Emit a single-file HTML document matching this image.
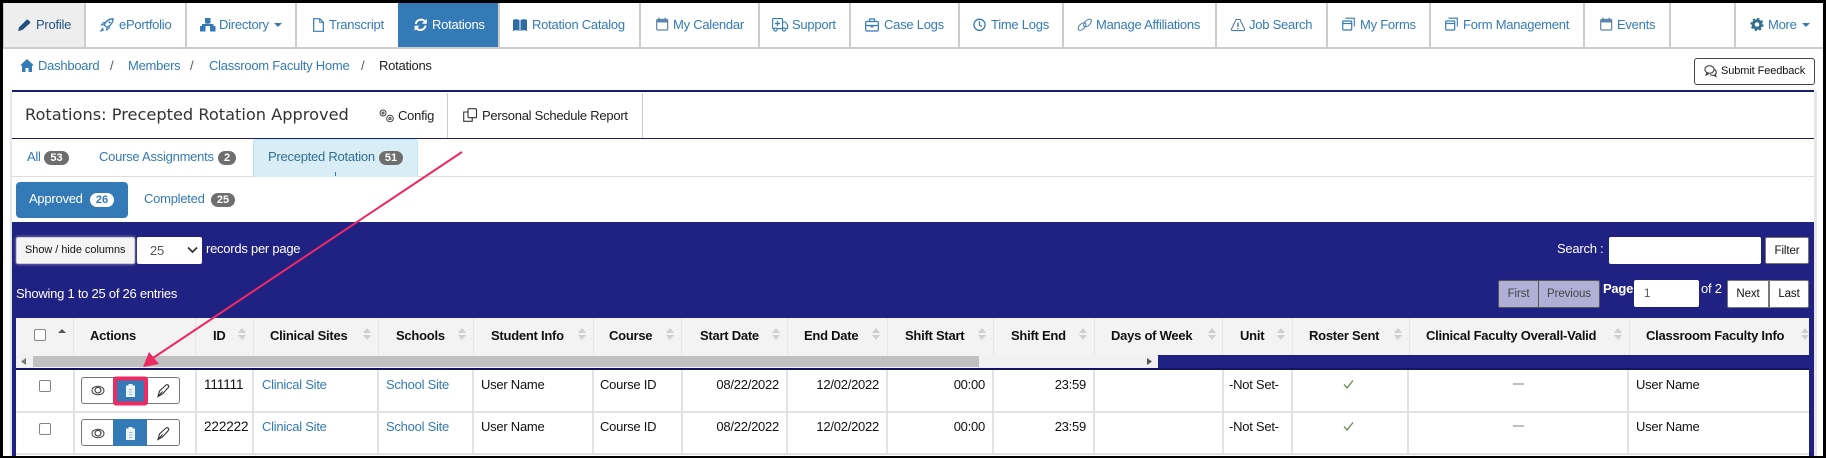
<!DOCTYPE html>
<html><head><meta charset="utf-8"><title>Rotations</title>
<style>
html,body{margin:0;padding:0}
body{width:1826px;height:458px;position:relative;overflow:hidden;background:#fff;font-family:"Liberation Sans",Arial,sans-serif;font-size:13px;color:#111}
div,span.t{position:absolute}
.t{white-space:nowrap;line-height:16px;letter-spacing:-.25px}
.l{color:#337ab7}
.d{background:#ccc;width:2px;top:3px;height:45px}
.v{background:#e6e6e6;width:1px;top:318px;height:37px}
.r{background:#e2e2e2;width:2px;top:370px;height:84px}
.b{height:14px;border-radius:7px;background:#6e6e6e;color:#fff;font-weight:bold;font-size:11px;line-height:15px;text-align:center}
.h{font-weight:bold;color:#111;top:328px}
.w{color:#fff}
.btn{background:#fff;border:1px solid #777;box-sizing:border-box;border-radius:2px;text-align:center;font-size:11.5px;line-height:27px;color:#111;letter-spacing:-.1px}
.c{background:#fff;border:1px solid #858585;box-sizing:border-box;border-radius:2px;width:12px;height:12px}
</style></head><body>

<!-- NAV -->
<div style="left:3px;top:3px;width:81px;height:45px;background:#eee"></div>
<div style="left:398px;top:3px;width:100px;height:45px;background:#337ab7"></div>
<div style="left:0;top:47px;width:1826px;height:2px;background:#ccc"></div>
<div class="d" style="left:2px"></div><div class="d" style="left:84px"></div><div class="d" style="left:185px"></div><div class="d" style="left:295px"></div><div class="d" style="left:498px"></div><div class="d" style="left:639px"></div><div class="d" style="left:758px"></div><div class="d" style="left:849px"></div><div class="d" style="left:958px"></div><div class="d" style="left:1062px"></div><div class="d" style="left:1215px"></div><div class="d" style="left:1326px"></div><div class="d" style="left:1429px"></div><div class="d" style="left:1583px"></div><div class="d" style="left:1669px"></div><div class="d" style="left:1734px"></div>

<span class="t" style="left:36px;top:17px;color:#23527c">Profile</span>
<span class="t l" style="left:119px;top:17px">ePortfolio</span>
<span class="t l" style="left:219px;top:17px">Directory</span>
<span class="t l" style="left:329px;top:17px">Transcript</span>
<span class="t w" style="left:432px;top:17px">Rotations</span>
<span class="t l" style="left:532px;top:17px">Rotation Catalog</span>
<span class="t l" style="left:673px;top:17px">My Calendar</span>
<span class="t l" style="left:792px;top:17px">Support</span>
<span class="t l" style="left:884px;top:17px">Case Logs</span>
<span class="t l" style="left:991px;top:17px">Time Logs</span>
<span class="t l" style="left:1096px;top:17px">Manage Affiliations</span>
<span class="t l" style="left:1249px;top:17px">Job Search</span>
<span class="t l" style="left:1360px;top:17px">My Forms</span>
<span class="t l" style="left:1463px;top:17px">Form Management</span>
<span class="t l" style="left:1617px;top:17px">Events</span>
<span class="t l" style="left:1768px;top:17px">More</span>

<!-- BREADCRUMB -->
<span class="t l" style="left:38px;top:58px">Dashboard</span>
<span class="t" style="left:110px;top:58px;color:#555">/</span>
<span class="t l" style="left:128px;top:58px">Members</span>
<span class="t" style="left:190px;top:58px;color:#555">/</span>
<span class="t l" style="left:209px;top:58px">Classroom Faculty Home</span>
<span class="t" style="left:361px;top:58px;color:#555">/</span>
<span class="t" style="left:379px;top:58px;color:#222">Rotations</span>
<div style="left:1694px;top:58px;width:121px;height:27px;border:1px solid #444;box-sizing:border-box;border-radius:3px;background:#fff"></div>
<span class="t" style="left:1721px;top:63px;font-size:11px;letter-spacing:-.1px;color:#111">Submit Feedback</span>

<!-- PANEL -->
<div style="left:10px;top:91px;width:2px;height:365px;background:#e6e6e6"></div>
<div style="left:1814px;top:91px;width:3px;height:365px;background:#e6e6e6"></div>
<div style="left:12px;top:89.5px;width:1802px;height:2px;background:#1a1c6e"></div>
<div style="left:12px;top:138px;width:1802px;height:1px;background:#1a1c6e"></div>
<span class="t" style="left:25px;top:107px;font-family:'DejaVu Sans',sans-serif;font-size:16.2px;letter-spacing:0;color:#333">Rotations: Precepted Rotation Approved</span>
<span class="t" style="left:398px;top:108px;color:#222">Config</span>
<span class="t" style="left:482px;top:108px;color:#222">Personal Schedule Report</span>
<div style="left:447px;top:93px;width:1px;height:45px;background:#ccc"></div>
<div style="left:642px;top:93px;width:1px;height:45px;background:#ccc"></div>

<!-- TABS -->
<div style="left:12px;top:176px;width:1802px;height:1px;background:#ddd"></div>
<div style="left:253px;top:139px;width:165px;height:38px;background:#d9edf7;border:1px solid #bce8f1;border-bottom:0;box-sizing:border-box;border-radius:3px 3px 0 0"></div>
<div style="left:335px;top:172px;width:1px;height:4px;background:#337ab7"></div>
<span class="t l" style="left:27px;top:149px">All</span><div class="b" style="left:44px;top:151px;width:25px">53</div>
<span class="t l" style="left:99px;top:149px">Course Assignments</span><div class="b" style="left:218px;top:151px;width:18px">2</div>
<span class="t" style="left:268px;top:149px;color:#31708f">Precepted Rotation</span><div class="b" style="left:379px;top:151px;width:24px">51</div>
<div style="left:16px;top:182px;width:112px;height:36px;background:#337ab7;border-radius:4px"></div>
<span class="t w" style="left:29px;top:191px">Approved</span><div class="b" style="left:90px;top:193px;width:24px;background:#fff;color:#337ab7">26</div>
<span class="t l" style="left:144px;top:191px">Completed</span><div class="b" style="left:211px;top:193px;width:24px">25</div>

<!-- NAVY -->
<div style="left:12px;top:222px;width:1802px;height:234px;background:#202283"></div>
<div style="left:16px;top:237px;width:119px;height:27px;background:#f4f4f4;border:1px solid #ccc;box-sizing:border-box;border-radius:2px;box-shadow:0 0 3px #9a9ac8"></div>
<span class="t" style="left:25px;top:242px;font-size:10.9px;letter-spacing:0;color:#111">Show / hide columns</span>
<div style="left:137px;top:237px;width:65px;height:27px;background:#fff;border-radius:2px"></div>
<span class="t" style="left:150px;top:243px;color:#555">25</span>
<span class="t w" style="left:206px;top:241px">records per page</span>
<span class="t w" style="left:16px;top:286px">Showing 1 to 25 of 26 entries</span>

<span class="t w" style="left:1557px;top:241px">Search :</span>
<div style="left:1609px;top:237px;width:152px;height:27px;background:#fff;border-radius:2px"></div>
<div class="btn" style="left:1765px;top:237px;width:44px;height:27px">Filter</div>
<div class="btn" style="left:1498px;top:280px;width:41px;height:28px;background:#b0b0d6;border-color:#555;color:#444;border-radius:2px 0 0 2px">First</div>
<div class="btn" style="left:1538px;top:280px;width:62px;height:28px;background:#b0b0d6;border-color:#555;color:#444;border-radius:0 2px 2px 0">Previous</div>
<span class="t w" style="left:1603px;top:281px;font-weight:bold">Page</span>
<div style="left:1634px;top:280px;width:65px;height:27px;background:#fff;border-radius:2px"></div>
<span class="t" style="left:1644px;top:286px;color:#555;font-size:11.5px">1</span>
<span class="t w" style="left:1701px;top:281px">of 2</span>
<div class="btn" style="left:1727px;top:280px;width:42px;height:28px;border-radius:2px 0 0 2px">Next</div>
<div class="btn" style="left:1769px;top:280px;width:40px;height:28px;border-radius:0 2px 2px 0">Last</div>

<!-- TABLE -->
<div style="left:16px;top:318px;width:1793px;height:37px;background:#f3f3f3"></div>
<div style="left:16px;top:355px;width:1142px;height:13px;background:#f1f1f1"></div>
<div style="left:33px;top:356px;width:946px;height:11px;background:#c0c0c0"></div>
<div style="left:16px;top:368px;width:1793px;height:2px;background:#14155e"></div>
<div style="left:16px;top:370px;width:1793px;height:86px;background:#fff"></div>
<div style="left:16px;top:411px;width:1793px;height:2px;background:#e2e2e2"></div>
<div style="left:16px;top:453px;width:1793px;height:2px;background:#e2e2e2"></div>

<div class="v" style="left:73px"></div><div class="v" style="left:195px"></div><div class="v" style="left:253px"></div><div class="v" style="left:378px"></div><div class="v" style="left:473px"></div><div class="v" style="left:593px"></div><div class="v" style="left:681px"></div><div class="v" style="left:787px"></div><div class="v" style="left:887px"></div><div class="v" style="left:993px"></div><div class="v" style="left:1094px"></div><div class="v" style="left:1222px"></div><div class="v" style="left:1292px"></div><div class="v" style="left:1409px"></div><div class="v" style="left:1629px"></div>
<div class="r" style="left:73px"></div><div class="r" style="left:195px"></div><div class="r" style="left:252px"></div><div class="r" style="left:377px"></div><div class="r" style="left:472px"></div><div class="r" style="left:592px"></div><div class="r" style="left:681px"></div><div class="r" style="left:786px"></div><div class="r" style="left:886px"></div><div class="r" style="left:992px"></div><div class="r" style="left:1093px"></div><div class="r" style="left:1222px"></div><div class="r" style="left:1291px"></div><div class="r" style="left:1407px"></div><div class="r" style="left:1627px"></div>

<div class="c" style="left:34px;top:329px"></div>
<span class="t h" style="left:90px">Actions</span>
<span class="t h" style="left:213px">ID</span>
<span class="t h" style="left:270px">Clinical Sites</span>
<span class="t h" style="left:396px">Schools</span>
<span class="t h" style="left:491px">Student Info</span>
<span class="t h" style="left:609px">Course</span>
<span class="t h" style="left:700px">Start Date</span>
<span class="t h" style="left:804px">End Date</span>
<span class="t h" style="left:905px">Shift Start</span>
<span class="t h" style="left:1011px">Shift End</span>
<span class="t h" style="left:1111px">Days of Week</span>
<span class="t h" style="left:1240px">Unit</span>
<span class="t h" style="left:1309px">Roster Sent</span>
<span class="t h" style="left:1426px">Clinical Faculty Overall-Valid</span>
<span class="t h" style="left:1646px">Classroom Faculty Info</span>

<!-- ROW 1 -->
<div class="c" style="left:39px;top:380px"></div>
<div style="left:81px;top:377px;width:99px;height:27px;border:1px solid #777;box-sizing:border-box;border-radius:3px;background:#fff"></div>
<div style="left:113px;top:377px;width:34px;height:27px;background:#337ab7"></div>
<span class="t" style="left:204px;top:377px;font-size:13.5px;letter-spacing:-.1px">111111</span>
<span class="t l" style="left:262px;top:377px">Clinical Site</span>
<span class="t l" style="left:386px;top:377px">School Site</span>
<span class="t" style="left:481px;top:377px">User Name</span>
<span class="t" style="left:600px;top:377px">Course ID</span>
<span class="t" style="left:699px;top:377px;width:80px;text-align:right">08/22/2022</span>
<span class="t" style="left:799px;top:377px;width:80px;text-align:right">12/02/2022</span>
<span class="t" style="left:925px;top:377px;width:60px;text-align:right">00:00</span>
<span class="t" style="left:1026px;top:377px;width:60px;text-align:right">23:59</span>
<span class="t" style="left:1229px;top:377px">-Not Set-</span>
<span class="t" style="left:1636px;top:377px">User Name</span>

<!-- ROW 2 -->
<div class="c" style="left:39px;top:423px"></div>
<div style="left:81px;top:419px;width:99px;height:27px;border:1px solid #777;box-sizing:border-box;border-radius:3px;background:#fff"></div>
<div style="left:113px;top:419px;width:34px;height:27px;background:#337ab7"></div>
<span class="t" style="left:204px;top:419px;font-size:13.5px;letter-spacing:-.1px">222222</span>
<span class="t l" style="left:262px;top:419px">Clinical Site</span>
<span class="t l" style="left:386px;top:419px">School Site</span>
<span class="t" style="left:481px;top:419px">User Name</span>
<span class="t" style="left:600px;top:419px">Course ID</span>
<span class="t" style="left:699px;top:419px;width:80px;text-align:right">08/22/2022</span>
<span class="t" style="left:799px;top:419px;width:80px;text-align:right">12/02/2022</span>
<span class="t" style="left:925px;top:419px;width:60px;text-align:right">00:00</span>
<span class="t" style="left:1026px;top:419px;width:60px;text-align:right">23:59</span>
<span class="t" style="left:1229px;top:419px">-Not Set-</span>
<span class="t" style="left:1636px;top:419px">User Name</span>

<!-- ICONS + OVERLAY -->
<svg width="1826" height="458" viewBox="0 0 1826 458" style="position:absolute;left:0;top:0" fill="none">
<defs>
<g id="s"><path d="M0 5L4 0l4 5z M0 7l4 5 4-5z" fill="#cfcfcf"/></g>
<g id="cal"><rect x=".7" y="2.500" width="11" height="10.500" rx="1" stroke="#5b86ad" stroke-width="1.200"/><rect x=".7" y="2.500" width="11" height="3" fill="#5b86ad"/><path d="M3.200 0.700v2M9.200 0.700v2" stroke="#5b86ad" stroke-width="1.500"/></g>
<g id="frm"><rect x=".7" y="4" width="9" height="9" rx="1" stroke="#337ab7" stroke-width="1.200"/><path d="M.7 6.500h9" stroke="#337ab7" stroke-width="1.200"/><path d="M3.500 1.200h8.800v8.300" stroke="#337ab7" stroke-width="1.100"/></g>
<g id="eye"><ellipse cx="6.500" cy="5.500" rx="6" ry="4.300" stroke="#444" stroke-width="1"/><ellipse cx="6.500" cy="5.200" rx="3" ry="2.800" stroke="#444" stroke-width="1.200"/></g>
<g id="clip"><path d="M1 2.500h2.500V1h4v1.500H10V14H1z" fill="#eef5fb"/><path d="M4 6.500h3.500M4 9h3.500M4 11.500h3.500" stroke="#9bbcdb" stroke-width="1"/></g>
<g id="pen"><path d="M1 12.500L2.500 7 9 1c1.500-1 3.500.8 2.500 2.300L5.500 10z" stroke="#333" stroke-width="1.100"/><path d="M1 12.500l4.500-5" stroke="#333" stroke-width="1"/></g>
<g id="chk"><path d="M0 4.500L3 8l6-7.500" stroke="#5c8248" stroke-width="1.200"/></g>
</defs>

<!-- nav icons -->
<g transform="translate(18,18)"><path d="M0 13l1-3.600L8.600 1.800a1 1 0 0 1 1.400 0l2 2a1 1 0 0 1 0 1.400L4.400 12z" fill="#23527c"/></g>
<g transform="translate(100,18)"><path d="M13 .8C9 .8 5.800 3.200 4.200 6.800l2.600 2.600c3.600-1.600 6.200-4.800 6.200-8.600z" stroke="#337ab7" stroke-width="1.300"/><circle cx="9.500" cy="4.300" r="1.100" fill="#337ab7"/><path d="M4.200 6.800H1.500l2-2.300h2.400M6.800 9.400v2.600l2.400-2V7.600M3 9.800l-2 3 3-1" stroke="#337ab7" stroke-width="1.100"/></g>
<g transform="translate(200,18)" fill="#337ab7"><rect x="5" y="0" width="5.500" height="5.500"/><rect x="0" y="8" width="5.500" height="5.500"/><rect x="10" y="8" width="5.500" height="5.500"/><path d="M2.500 8V6.500h10.500V8M7.700 5v2" stroke="#337ab7"/></g>
<g transform="translate(313,18)"><path d="M.7.7h6l3.600 3.600v9h-9.600z" stroke="#337ab7" stroke-width="1.200"/><path d="M6.700.7v3.600h3.600" stroke="#337ab7" stroke-width="1"/></g>
<g transform="translate(414,18)"><path d="M1.700 6a5.400 5.400 0 0 1 9.300-2.600M11.600 7.600A5.400 5.400 0 0 1 2.300 10.200" stroke="#fff" stroke-width="2"/><path d="M12.800 .8v5H7.800zM.6 12.800v-5h5z" fill="#fff"/></g>
<g transform="translate(513,19)" fill="#2d6da3"><path d="M0 1c2-1 5-1 6.500.2V12c-1.500-1-4.500-1-6.500 0zM7.500 1.200C9 0 12 0 14 1v11c-2-1-5-1-6.500 0z"/></g>
<use href="#cal" x="656" y="17"/>
<g transform="translate(772,18)" stroke="#337ab7" stroke-width="1.100"><rect x=".6" y=".6" width="10" height="10" rx="1"/><path d="M11 4h2.500l2 3v3.500H11"/><circle cx="3.500" cy="11.500" r="1.600" fill="#fff"/><circle cx="12" cy="11.500" r="1.600" fill="#fff"/><path d="M5.500 3v5M3 5.500h5" stroke-width="1.300"/></g>
<g transform="translate(865,18)" stroke="#337ab7" stroke-width="1.200"><rect x=".7" y="3.500" width="12.600" height="9.500" rx="1"/><path d="M4.500 3.500V1h5v2.500M.7 7.500h12.600"/><path d="M6 7v2h2V7" stroke-width="1"/></g>
<g transform="translate(973,18)" stroke="#337ab7" stroke-width="1.300"><circle cx="6.500" cy="6.800" r="5.600"/><path d="M6.500 3.300v3.700l2.400 1.600"/></g>
<g transform="translate(1077,18)" stroke="#4d7ea8" stroke-width="1"><ellipse cx="5" cy="8.500" rx="4.800" ry="2.600" transform="rotate(-45 5 8.500)"/><ellipse cx="10.500" cy="5" rx="4.800" ry="2.600" transform="rotate(-45 10.500 5)"/></g>
<g transform="translate(1231,18)" stroke="#4d7ea8" stroke-width="1.100"><path d="M5 1.500h4L13.500 11c.3 1-.2 1.600-1 1.600H1.500c-.8 0-1.300-.6-1-1.600z" stroke-linejoin="round"/><path d="M7 4.500v4.500M7 10v1.300" stroke-width="1.400"/></g>
<use href="#frm" x="1342" y="17"/>
<use href="#frm" x="1445" y="17"/>
<use href="#cal" x="1600" y="17"/>
<g transform="translate(1757,24.500)"><circle r="3.800" stroke="#31708f" stroke-width="3"/><circle r="5.600" stroke="#31708f" stroke-width="2" stroke-dasharray="2.200 2.200"/></g>
<path d="M274 23h8l-4 4zM1802 23h8l-4 4z" fill="#337ab7"/>

<!-- breadcrumb / header icons -->
<g transform="translate(20,59)"><path d="M7 0L0 6.500h2V13h3.500V9h3v4H12V6.500h2z" fill="#337ab7"/></g>
<g transform="translate(1704,65)" stroke="#333" stroke-width="1"><ellipse cx="5.500" cy="4.500" rx="4.600" ry="3.800"/><path d="M3 8l-1 2 3-1.500"/><path d="M10.500 4.500c2 1 2.500 4 .5 5l1 2-2.500-1.300c-1 .3-2.500 0-3.200-.7"/></g>
<g transform="translate(379,109)" stroke="#444" stroke-width="1"><circle cx="4" cy="4" r="3"/><circle cx="4" cy="4" r="1"/><circle cx="11" cy="9.500" r="3.300"/><circle cx="11" cy="9.500" r="1.100"/></g>
<g transform="translate(463,108)" stroke="#333" stroke-width="1.100"><rect x="5" y=".7" width="8.500" height="9" rx="1"/><path d="M5 4H.7v9.300h8.500V9.700"/></g>

<!-- selects -->
<path d="M188 247.500l4.500 4.500 4.500-4.500" stroke="#333" stroke-width="1.700"/>

<!-- sort arrows -->
<path d="M58 333l4-4 4 4z" fill="#555"/>
<use href="#s" x="238" y="328"/><use href="#s" x="363" y="328"/><use href="#s" x="458" y="328"/><use href="#s" x="578" y="328"/><use href="#s" x="666" y="328"/><use href="#s" x="772" y="328"/><use href="#s" x="872" y="328"/><use href="#s" x="978" y="328"/><use href="#s" x="1079" y="328"/><use href="#s" x="1208" y="328"/><use href="#s" x="1277" y="328"/><use href="#s" x="1394" y="328"/><use href="#s" x="1614" y="328"/><use href="#s" x="1801" y="328"/>

<!-- scrollbar arrows -->
<path d="M26 358v7l-5-3.500z" fill="#777"/><path d="M1147 358v7l5-3.500z" fill="#555"/>

<!-- action icons -->
<use href="#eye" x="91.500" y="385"/><use href="#clip" x="125" y="383"/><use href="#pen" x="157" y="384"/>
<use href="#eye" x="91.500" y="428"/><use href="#clip" x="125" y="426"/><use href="#pen" x="157" y="427"/>
<use href="#chk" x="1344" y="380"/><use href="#chk" x="1344" y="422"/>
<path d="M1513 384h11M1513 426h11" stroke="#999" stroke-width="1.300"/>

<!-- highlight + arrow -->
<rect x="115" y="378.500" width="31" height="25" rx="1" stroke="#ee2a63" stroke-width="4"/>
<path d="M462 152L153 358" stroke="#ee2a63" stroke-width="2"/>
<path d="M143 367L149 352L159 364z" fill="#ee2a63"/>
</svg>

<!-- outer black frame -->
<div style="left:0;top:0;width:1826px;height:3px;background:#000"></div>
<div style="left:0;top:456px;width:1826px;height:2px;background:#000"></div>
<div style="left:0;top:0;width:3px;height:458px;background:#000"></div>
<div style="left:1823px;top:0;width:3px;height:458px;background:#000"></div>
</body></html>
